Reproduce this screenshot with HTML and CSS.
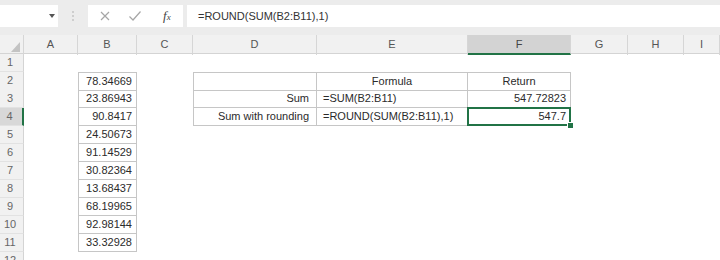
FILE: index.html
```html
<!DOCTYPE html>
<html lang="en">
<head>
    <meta charset="UTF-8">
    <meta name="viewport" content="width=device-width, initial-scale=1.0">
    <title>ROUND with SUM</title>
    <link rel="stylesheet" href="styles.css">
</head>
<body>
    <div class="toolbar">
        <div class="namebox"><span class="caret"></span></div>
        <div class="grip">
            <svg width="4" height="12" viewBox="0 0 4 12"><circle cx="2" cy="2" r="1" /><circle cx="2" cy="6" r="1" /><circle cx="2" cy="10" r="1" /></svg>
        </div>
        <div class="fxbox">
            <svg class="icon" width="12" height="12" viewBox="0 0 12 12"><path d="M2 2 L10 10 M10 2 L2 10" /></svg>
            <svg class="icon" width="14" height="12" viewBox="0 0 14 12"><path d="M1.5 6.5 L5 10 L12.5 1.5" /></svg>
            <span class="fx">f<small>x</small></span>
        </div>
        <div class="formula">=ROUND(SUM(B2:B11),1)</div>
    </div>

    <div class="sheet">
        <div class="row head">
            <div class="corner"><span class="tri"></span></div>
            <div>A</div><div>B</div><div>C</div><div>D</div><div>E</div>
            <div class="on">F</div><div>G</div><div>H</div><div>I</div>
        </div>
        <div class="row"><div class="num">1</div><div></div><div></div><div></div><div></div><div></div><div></div><div></div><div></div><div></div></div>
        <div class="row"><div class="num">2</div><div></div><div class="bx bl bt r">78.34669</div><div></div><div class="bx bl bt"></div><div class="bx bt c">Formula</div><div class="bx bt c">Return</div><div></div><div></div><div></div></div>
        <div class="row"><div class="num">3</div><div></div><div class="bx bl r">23.86943</div><div></div><div class="bx bl r lbl">Sum</div><div class="bx l">=SUM(B2:B11)</div><div class="bx r">547.72823</div><div></div><div></div><div></div></div>
        <div class="row"><div class="num on">4</div><div></div><div class="bx bl r">90.8417</div><div></div><div class="bx bl r lbl">Sum with rounding</div><div class="bx l">=ROUND(SUM(B2:B11),1)</div><div class="bx r sel">547.7</div><div></div><div></div><div></div></div>
        <div class="row"><div class="num">5</div><div></div><div class="bx bl r">24.50673</div><div></div><div></div><div></div><div></div><div></div><div></div><div></div></div>
        <div class="row"><div class="num">6</div><div></div><div class="bx bl r">91.14529</div><div></div><div></div><div></div><div></div><div></div><div></div><div></div></div>
        <div class="row"><div class="num">7</div><div></div><div class="bx bl r">30.82364</div><div></div><div></div><div></div><div></div><div></div><div></div><div></div></div>
        <div class="row"><div class="num">8</div><div></div><div class="bx bl r">13.68437</div><div></div><div></div><div></div><div></div><div></div><div></div><div></div></div>
        <div class="row"><div class="num">9</div><div></div><div class="bx bl r">68.19965</div><div></div><div></div><div></div><div></div><div></div><div></div><div></div></div>
        <div class="row"><div class="num">10</div><div></div><div class="bx bl r">92.98144</div><div></div><div></div><div></div><div></div><div></div><div></div><div></div></div>
        <div class="row"><div class="num">11</div><div></div><div class="bx bl r">33.32928</div><div></div><div></div><div></div><div></div><div></div><div></div><div></div></div>
        <div class="row"><div class="num">12</div><div></div><div></div><div></div><div></div><div></div><div></div><div></div><div></div><div></div></div>
    </div>
</body>
</html>
```

FILE: styles.css
```css
body { margin: 0; font-family: "Liberation Sans", Arial, sans-serif; font-size: 11px; color: #2b2b2b; background: #fff; overflow: hidden; }

/* formula bar */
.toolbar { display: flex; height: 35px; padding-top: 5px; box-sizing: border-box; background: #ececec; }
.toolbar > div { height: 22px; box-sizing: border-box; }
.namebox { width: 58px; background: #fff; position: relative; }
.caret { position: absolute; left: 49px; top: 9px; border-left: 3px solid transparent; border-right: 3px solid transparent; border-top: 4px solid #555; }
.grip { width: 30px; display: flex; align-items: center; justify-content: center; }
.grip svg { fill: #c4c4c4; }
.fxbox { width: 95px; background: #fff; display: flex; align-items: center; padding-left: 11px; gap: 17px; }
.icon { fill: none; stroke: #a6a6a6; stroke-width: 1.2; }
.fx { font-family: "Liberation Serif", serif; font-style: italic; font-size: 13px; color: #444; margin-left: 4px; }
.fx small { font-size: 9px; }
.formula { flex: 1; margin-left: 4px; background: #fff; padding-left: 11px; line-height: 22px; color: #333; }

/* grid */
.row { display: grid; grid-template-columns: 24px 54px 59px 56px 124px 151px 103px 57px 56px 1fr; height: 18px; }
.row > div { box-sizing: border-box; line-height: 17px; padding: 0 4px; white-space: nowrap; overflow: visible; }
.head { background: #f1f1f1; border-bottom: 1px solid #d4d4d4; color: #555; }
.head > div { text-align: center; border-right: 1px solid #d6d6d6; line-height: 18px; }
.head > div.on { background: #d3d3d3; border-bottom: 2px solid #217346; color: #444; }
.corner { position: relative; }
.tri { position: absolute; right: 3px; bottom: 3px; border-left: 9px solid transparent; border-bottom: 10px solid #c3c3c3; }
.row > .num { background: #f1f1f1; border-right: 1px solid #d4d4d4; border-bottom: 1px solid #e2e2e2; color: #666; text-align: center; padding: 0 3px 0 0; }
.row > .num.on { background: #d8d8d8; border-right: 2px solid #217346; }

.bx { border-right: 1px solid #c6c6c6; border-bottom: 1px solid #c6c6c6; }
.bl { border-left: 1px solid #c6c6c6; }
.bt { border-top: 1px solid #c6c6c6; }
.r { text-align: right; }
.c { text-align: center; }
.row > .l { padding-left: 6px; }
.row > .lbl { padding-right: 7px; }
.sel { position: relative; }
.sel::after { content: ""; position: absolute; left: -1px; top: -1px; right: -1px; bottom: -1px; border: 2px solid #217346; }
.sel::before { content: ""; position: absolute; right: -4px; bottom: -4px; width: 5px; height: 5px; background: #217346; border: 1px solid #fff; z-index: 1; }
```
